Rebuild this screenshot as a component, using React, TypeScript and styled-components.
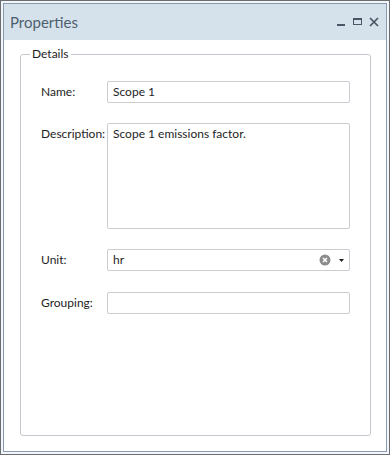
import React from "react";
import styled, { createGlobalStyle } from "styled-components";

const Global = createGlobalStyle`
  html, body { margin: 0; padding: 0; background: #ffffff; }
  #root { width: 390px; height: 455px; }
  * { box-sizing: border-box; }
`;

const FONT = `"Segoe UI", Lato, "Open Sans", sans-serif`;

const Outer = styled.div`
  width: 390px;
  height: 455px;
  border: 1px solid #6a6d72;
  padding: 2px;
  background: #f3f6f9;
  font-family: ${FONT};
`;

const Inner = styled.div`
  height: 100%;
  border: 1px solid #8a9ab2;
  display: flex;
  flex-direction: column;
  background: #ffffff;
`;

const TitleBar = styled.div`
  height: 36px;
  flex: none;
  background: #d5e2ec;
  display: flex;
  align-items: center;
  padding: 0 7px 0 6px;
`;

const Title = styled.div`
  flex: 1;
  font-size: 15px;
  color: #4f5e6e;
  padding-bottom: 1px;
`;

const Controls = styled.div`
  display: flex;
  align-items: center;
  gap: 6px;
`;

const Ctl = styled.svg`
  display: block;
  width: 10px;
  height: 10px;
`;

const Body = styled.div`
  flex: 1;
  display: flex;
  flex-direction: column;
  padding: 6px 15px 15px 16px;
`;

const Group = styled.fieldset`
  flex: 1;
  margin: 0;
  border: 1px solid #c5c8ce;
  border-radius: 3px;
  padding: 19px 0 0 20px;
  min-width: 0;
`;

const Legend = styled.legend`
  font-size: 12px;
  line-height: 16px;
  color: #1e1e1e;
  padding: 0 2px;
  margin-left: -11px;
`;

const Form = styled.div`
  display: grid;
  grid-template-columns: 66px 243px;
  row-gap: 20px;
  font-size: 12px;
  color: #1e1e1e;
`;

const Label = styled.div<{ $push?: boolean }>`
  padding-top: 4px;
  line-height: 14px;
  white-space: nowrap;
  margin-top: ${(p) => (p.$push ? 1 : 0)}px;
`;

const Field = styled.div<{ $h?: number; $push?: boolean }>`
  height: ${(p) => p.$h ?? 22}px;
  margin-top: ${(p) => (p.$push ? 1 : 0)}px;
  border: 1px solid #c9ccd1;
  border-radius: 2px;
  background: #ffffff;
  display: flex;
  align-items: ${(p) => (p.$h ? "flex-start" : "center")};
  padding: ${(p) => (p.$h ? "3px 5px" : "0 5px")};
  line-height: 14px;
  color: #1e1e1e;
`;

const Value = styled.span`
  flex: 1;
`;

const ClearIcon = styled.svg`
  width: 12px;
  height: 12px;
  margin-right: 8px;
`;

const Arrow = styled.svg`
  width: 5px;
  height: 3px;
`;

export default function App() {
  return (
    <>
      <Global />
      <Outer>
        <Inner>
          <TitleBar>
            <Title>Properties</Title>
            <Controls>
              <Ctl viewBox="0 0 10 10">
                <rect x="0" y="7" width="8" height="2" fill="#4a5566" />
              </Ctl>
              <Ctl viewBox="0 0 10 10">
                <rect x="0.5" y="1.5" width="8" height="6" fill="none" stroke="#4a5566" strokeWidth="1" />
                <rect x="0.5" y="1" width="8" height="2" fill="#4a5566" />
              </Ctl>
              <Ctl viewBox="0 0 10 10">
                <path d="M1 1 L9 9 M9 1 L1 9" stroke="#4a5566" strokeWidth="1.7" />
              </Ctl>
            </Controls>
          </TitleBar>
          <Body>
            <Group>
              <Legend>Details</Legend>
              <Form>
                <Label>Name:</Label>
                <Field>
                  <Value>Scope 1</Value>
                </Field>
                <Label>Description:</Label>
                <Field $h={106}>
                  <Value>Scope 1 emissions factor.</Value>
                </Field>
                <Label>Unit:</Label>
                <Field>
                  <Value>hr</Value>
                  <ClearIcon viewBox="0 0 12 12">
                    <circle cx="6" cy="6" r="5.5" fill="#8c8c8c" />
                    <path d="M4 4 L8 8 M8 4 L4 8" stroke="#ffffff" strokeWidth="1.5" />
                  </ClearIcon>
                  <Arrow viewBox="0 0 5 3">
                    <path d="M0 0 H5 L2.5 3 Z" fill="#1e1e1e" />
                  </Arrow>
                </Field>
                <Label $push>Grouping:</Label>
                <Field $push />
              </Form>
            </Group>
          </Body>
        </Inner>
      </Outer>
    </>
  );
}
